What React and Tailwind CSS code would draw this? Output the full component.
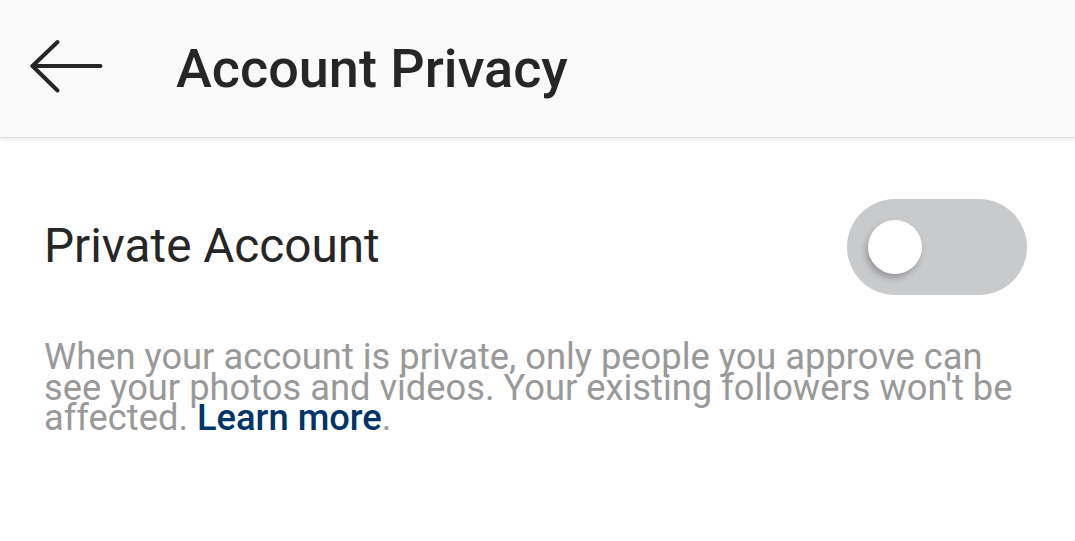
export default function App() {
  return (
    <div className="w-[1075px] h-[541px] bg-white overflow-hidden" style={{ fontFamily: 'Roboto, "Noto Sans", sans-serif' }}>
      <div className="h-[138px] bg-[#fafafa] flex items-center border-b border-[#dcdcdc] shadow-[0_2px_4px_rgba(0,0,0,0.08)] relative">
        <div className="w-[176px] pl-[26px] flex items-center">
          <svg width="80" height="60" viewBox="0 0 80 60" fill="none" stroke="#262626" strokeWidth="4" strokeLinecap="round" strokeLinejoin="round" className="mb-[6px]">
            <path d="M6.5 30 H74.5" />
            <path d="M31.5 6 L6.5 30 L31.5 54.5" />
          </svg>
        </div>
        <h1 className="text-[54px] font-medium text-[#262626] leading-none">Account Privacy</h1>
      </div>
      <div className="px-[44px]">
        <div className="flex items-center justify-between mt-[61px] pr-[4px]">
          <span className="text-[47.7px] text-[#262626] leading-none">Private Account</span>
          <div className="w-[180px] h-[96px] rounded-full bg-[#c9cacc] flex items-center pl-[21px]">
            <div className="w-[54px] h-[54px] rounded-full bg-white shadow-[-2px_4px_6px_rgba(0,0,0,0.25)]" />
          </div>
        </div>
        <p className="mt-[47px] text-[36.3px] leading-[30.7px] text-[#999999] pr-[10px]">
          When your account is private, only people you approve can see your photos and videos. Your existing followers won't be affected. <span className="text-[#003569] font-medium">Learn more</span>.
        </p>
      </div>
    </div>
  )
}
